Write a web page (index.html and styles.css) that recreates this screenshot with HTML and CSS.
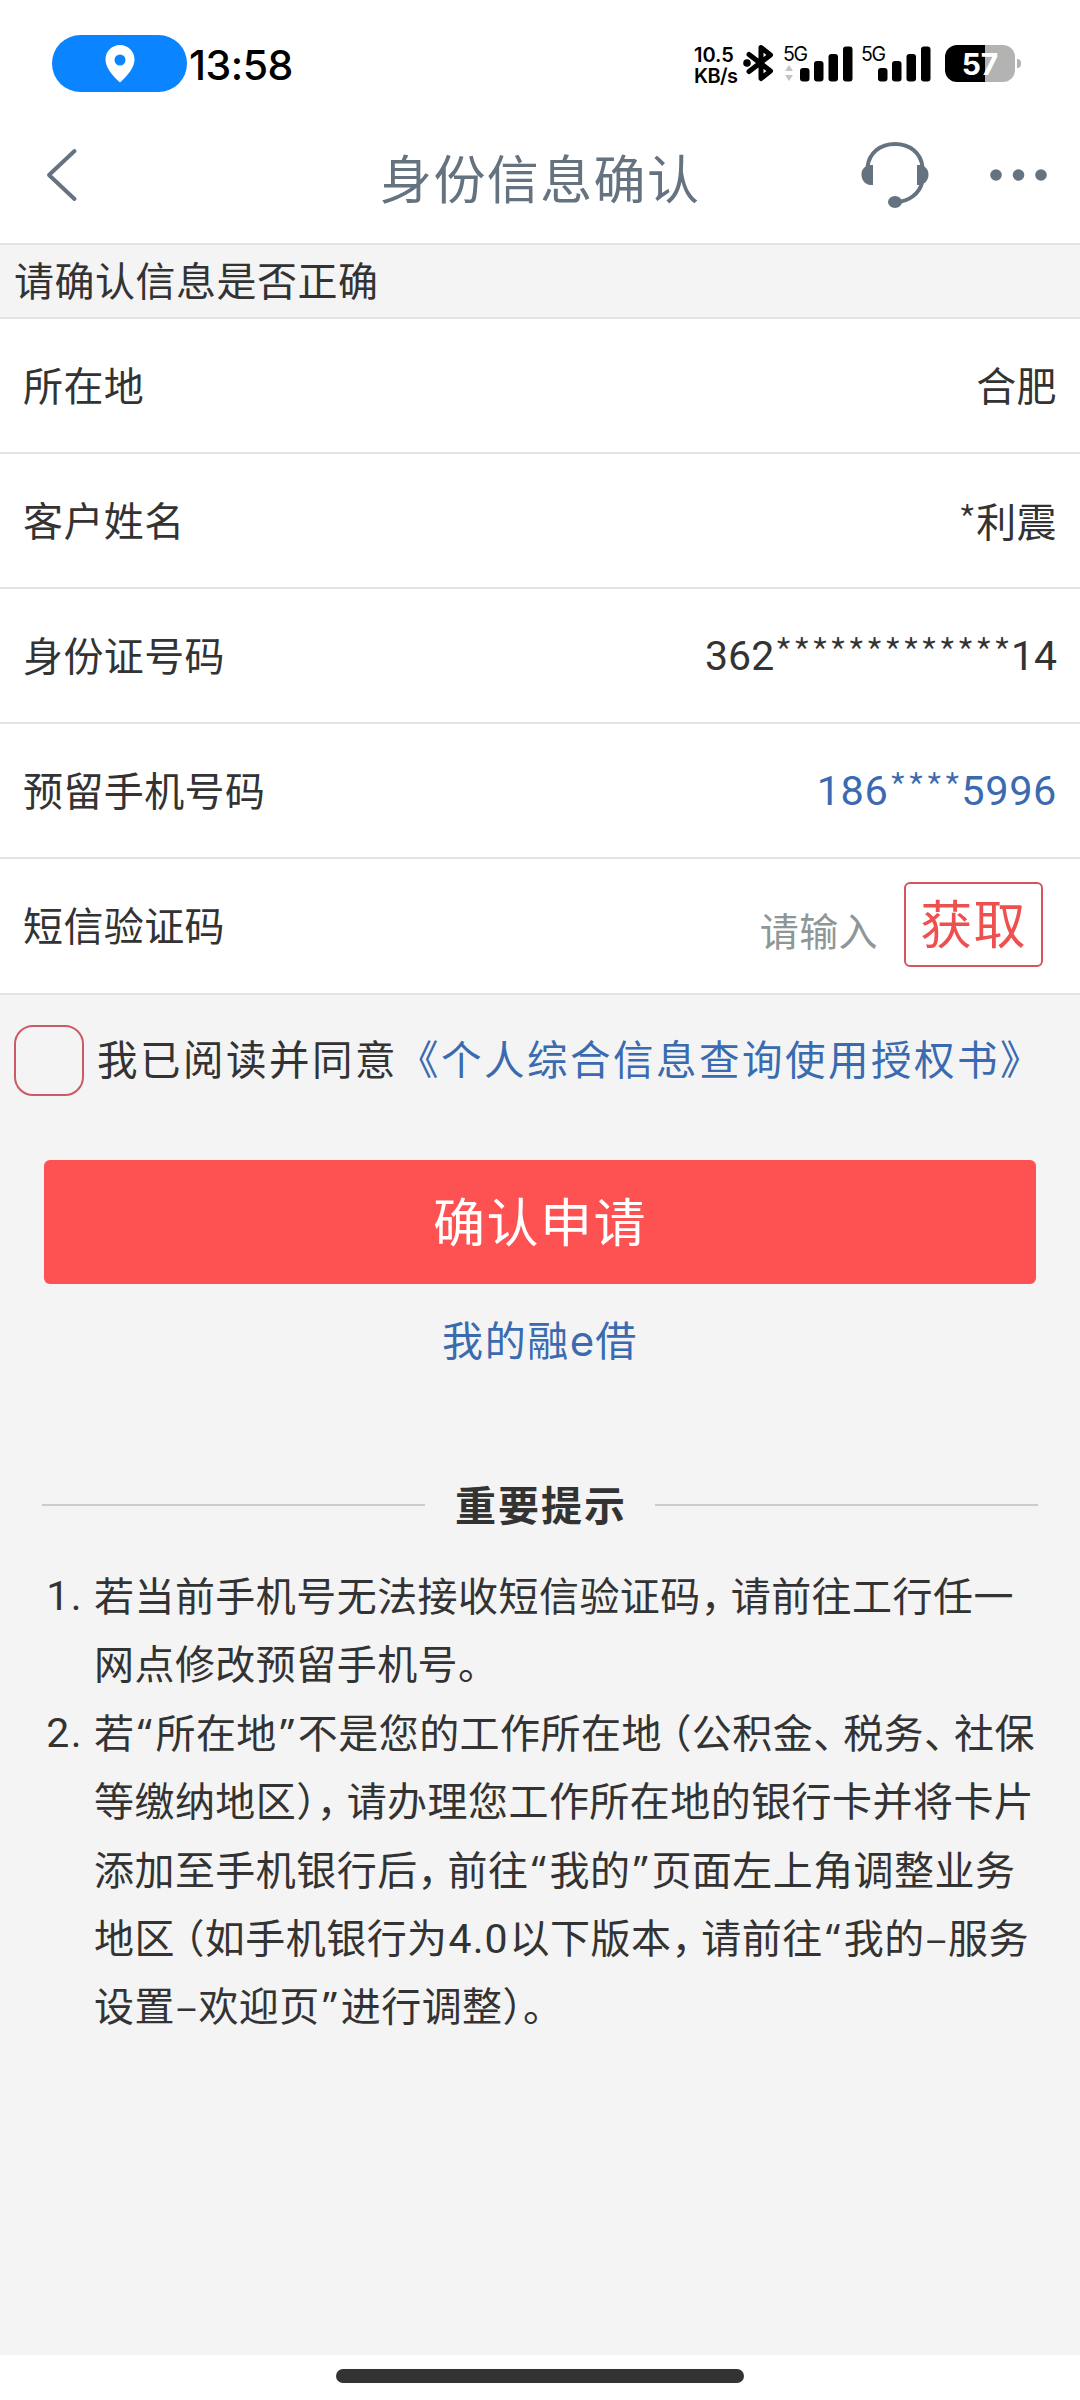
FILE: index.html
```html
<!DOCTYPE html>
<html lang="zh-CN">
<head>
<meta charset="utf-8">
<title>身份信息确认</title>
<link rel="stylesheet" href="styles.css">
</head>
<body>
<div class="screen">
  <div class="status">
    <div class="pill">
      <svg width="30" height="38" viewBox="0 0 30 38"><path fill="#fff" fill-rule="evenodd" d="M15 0C6.700 0 .5 6.500.5 14.500.5 22 6 29 15 37.500 24 29 29.500 22 29.500 14.500 29.500 6.500 23.300 0 15 0zM15 9.500a5.500 5.500 0 1 1 0 11 5.500 5.500 0 0 1 0-11z"/></svg>
    </div>
    <span class="clock">13:58</span>
    <div class="speed"><span class="rate">10.5</span><span class="unit">KB/s</span></div>
    <svg class="bluetooth" width="32" height="38" viewBox="0 0 32 38"><path d="M6 10.500 27.500 27 18 34.500V3.500L27.500 11 6 27.500" fill="none" stroke="#000" stroke-width="5" stroke-linejoin="round" stroke-linecap="round"/><circle cx="4" cy="19" r="3.800"/></svg>
    <svg class="signal" width="70" height="48" viewBox="0 -10 70 48">
      <text class="net" x="0" y="15.500" textLength="25">5G</text>
      <path fill="#c4c4c4" d="M6 20l4 6H2zM6 36l4-6H2z"/>
      <rect x="17" y="23" width="9.500" height="13.500" rx="3"/><rect x="31" y="16" width="9.500" height="20.500" rx="3"/><rect x="45.500" y="9" width="9.500" height="27.500" rx="3"/><rect x="60" y="1.500" width="9.500" height="35" rx="3"/>
    </svg>
    <svg class="signal second" width="70" height="48" viewBox="0 -10 70 48">
      <text class="net" x="0" y="15.500" textLength="25">5G</text>
      <rect x="17" y="23" width="9.500" height="13.500" rx="3"/><rect x="31" y="16" width="9.500" height="20.500" rx="3"/><rect x="45.500" y="9" width="9.500" height="27.500" rx="3"/><rect x="60" y="1.500" width="9.500" height="35" rx="3"/>
    </svg>
    <div class="battery">57</div><i class="nub"></i>
  </div>

  <div class="navbar">
    <svg class="back" width="32" height="54" viewBox="0 0 32 54"><path d="M28.500 3 3 27l25.500 24" fill="none" stroke="#65727f" stroke-width="4" stroke-linecap="round" stroke-linejoin="round"/></svg>
    <h1>身份信息确认</h1>
    <svg class="headset" width="68" height="68" viewBox="0 0 68 68"><path d="M6.500 26C8 12 19 3 34 3s26 9 27.500 23M61 42C58 53 48 60 36 61" fill="none" stroke="#65727f" stroke-width="4"/><path fill="#65727f" d="M12 24H9C3 25 .5 29 .5 33.500S3 43 9 44h3zM56 24h3c6 1 8.500 5 8.500 9.500S65 43 59 44h-3z"/><ellipse cx="34" cy="61" rx="7" ry="6" fill="#65727f"/></svg>
    <svg class="more" width="58" height="12" viewBox="0 0 58 12"><g fill="#65727f"><circle cx="6" cy="6" r="5.800"/><circle cx="28.500" cy="6" r="5.800"/><circle cx="51" cy="6" r="5.800"/></g></svg>
  </div>

  <div class="section">请确认信息是否正确</div>

  <div class="form">
    <div class="row"><span>所在地</span><span class="value">合肥</span></div>
    <div class="row"><span>客户姓名</span><span class="value"><span class="stars">*</span>利震</span></div>
    <div class="row"><span>身份证号码</span><span class="value id">362<span class="stars">*************</span>14</span></div>
    <div class="row"><span>预留手机号码</span><span class="value phone">186<span class="stars">****</span>5996</span></div>
    <div class="row"><span>短信验证码</span><span class="hint">请输入</span><button class="get">获取</button></div>
  </div>

  <div class="agree"><i class="check"></i><span>我已阅读并同意<a>《个人综合信息查询使用授权书》</a></span></div>
  <button class="submit">确认申请</button>
  <a class="mine">我的融<span class="latin">e</span>借</a>

  <div class="divider"><b>重要提示</b></div>

  <div class="tips">
    <div class="tip"><span class="num">1.</span><div>若当前手机号无法接收短信验证码<span class="mark">，</span>请前往工行任一<br>网点修改预留手机号。</div></div>
    <div class="tip"><span class="num">2.</span><div>若<span class="quote">“</span>所在地<span class="quote">”</span>不是您的工作所在地<span class="open">（</span>公积金<span class="mark">、</span>税务<span class="mark">、</span>社保<br>等缴纳地区<span class="close">）</span><span class="mark">，</span>请办理您工作所在地的银行卡并将卡片<br>添加至手机银行后<span class="mark">，</span>前往<span class="quote">“</span>我的<span class="quote">”</span>页面左上角调整业务<br>地区<span class="open">（</span>如手机银行为<span class="version">4.0</span>以下版本<span class="mark">，</span>请前往<span class="quote">“</span>我的<span class="dash">–</span>服务<br>设置<span class="dash">–</span>欢迎页<span class="quote">”</span>进行调整<span class="close">）</span>。</div></div>
  </div>

  <div class="gesture"><i></i></div>
</div>
</body>
</html>
```
FILE: styles.css
```css
* { box-sizing: border-box; }
body { margin: 0; background: #f4f4f4; color: #333; font-family: "Noto Sans CJK SC", sans-serif; text-spacing-trim: space-all; }
button { font-family: inherit; padding: 0; }
svg { display: block; flex: none; }
.screen { width: 1080px; height: 2400px; display: flex; flex-direction: column; overflow: hidden; }

.status { height: 110px; background: #fff; display: flex; align-items: flex-start; padding: 35px 0 0 52px; color: #000; flex: none; }
.pill { width: 135px; height: 57px; border-radius: 29px; background: #0b84ff; display: flex; justify-content: center; padding-top: 10px; }
.clock { width: 505px; padding-left: 2px; font: 500 41px/60px Inter, sans-serif; letter-spacing: -0.5px; }
.speed { width: 49px; padding: 10px 0 0 2px; font: 600 20px/21px Inter, sans-serif; display: flex; flex-direction: column; white-space: nowrap; }
.unit { letter-spacing: -0.6px; }
.bluetooth { margin: 9px 0 0 2px; }
.signal { margin: 0 0 0 8px; }
.signal.second { margin-left: 8px; }
.net { font: 400 19.500px Inter, sans-serif; }
.battery { width: 70px; height: 37px; margin: 10px 0 0 14px; border-radius: 12px; background: linear-gradient(90deg, #000 40px, #b3b3b3 40px); color: #fff; font: 700 30px/38px Inter, sans-serif; text-align: center; }
.nub { width: 4px; height: 9px; margin: 24px 0 0 2px; background: #b3b3b3; border-radius: 0 4px 4px 0; }

.navbar { height: 135px; background: #fff; border-bottom: 2px solid #e3e3e3; display: flex; align-items: flex-start; padding-left: 46px; color: #65727f; flex: none; }
.back { margin-top: 38px; }
h1 { margin: 29px 0 0 302px; width: 481px; font-weight: 400; font-size: 52px; line-height: 76px; letter-spacing: 1.400px; }
.headset { margin-top: 31px; }
.more { margin: 59px 0 0 61px; }

.section { height: 74px; line-height: 68px; padding-left: 14px; font-size: 40px; letter-spacing: 0.500px; border-bottom: 2px solid #e3e3e3; flex: none; }
.form { background: #fff; flex: none; }
.row { height: 135px; border-bottom: 2px solid #e3e3e3; padding: 0 23px 4px 23px; display: flex; align-items: center; font-size: 40px; letter-spacing: 0.400px; }
.row:last-child { height: 136px; }
.value { margin-left: auto; }
.stars { font-family: "Noto Sans CJK SC", sans-serif; font-weight: 300; font-size: 42px; letter-spacing: -0.400px; }
.id { font-family: Roboto, sans-serif; font-size: 41px; letter-spacing: 0; }
.phone { font-family: Roboto, sans-serif; font-size: 41.500px; letter-spacing: 0.600px; color: #3a6ab0; }
.id, .phone { line-height: 60px; }
.hint { margin-left: auto; color: #8f9696; font-size: 39px; padding-top: 9px; }
.get { width: 139px; height: 85px; margin: 1px 14px 0 26px; border: 2px solid #d3565c; border-radius: 6px; background: none; color: #ee504f; font-size: 52px; line-height: 76px; letter-spacing: 1.300px; padding-bottom: 6px; }

.agree { height: 165px; display: flex; padding: 30px 0 0 14px; font-size: 40.500px; line-height: 65px; letter-spacing: 2.500px; white-space: nowrap; flex: none; }
.check { width: 70px; height: 71px; border: 2px solid #c95a66; border-radius: 19px; margin-right: 13px; flex: none; }
a { color: #3a6ab0; }
.submit { width: 992px; height: 124px; margin-left: 44px; border: 0; border-radius: 6px; background: #fd5251; color: #fff; font-size: 52px; letter-spacing: 1.500px; padding-bottom: 5px; flex: none; }
.mine { height: 60px; margin-top: 24px; line-height: 60px; font-size: 41px; letter-spacing: 1.600px; text-align: center; flex: none; }
.latin { font-family: Inter, sans-serif; font-size: 42px; line-height: 1; letter-spacing: 1px; }
.divider { height: 60px; margin: 107px 42px 0 42px; display: flex; align-items: center; gap: 28px; font-size: 41px; letter-spacing: 2px; flex: none; }
.divider::before, .divider::after { content: ""; flex: 1; height: 2px; background: #ccc; }
.divider b { line-height: 56px; padding: 0 0 4px 2px; }

.tips { margin-top: 25px; font-size: 40px; line-height: 68.400px; letter-spacing: 0.450px; white-space: nowrap; flex: none; }
.tip { display: flex; }
.num { width: 94px; padding: 2px 11px 0 0; text-align: right; flex: none; font-family: Roboto, sans-serif; font-size: 41px; letter-spacing: 1.500px; }
.mark { font-feature-settings: "halt"; margin-right: 9.500px; }
.open { font-feature-settings: "halt"; margin-left: 9.500px; }
.close { font-feature-settings: "halt"; }
.quote { display: inline-block; width: 21px; text-align: center; font-family: "Noto Sans", sans-serif; line-height: 1; }
.dash { display: inline-block; width: 23.500px; text-align: center; line-height: 1; }
.version { display: inline-block; width: 62px; text-align: center; font-family: Roboto, sans-serif; font-size: 41px; letter-spacing: 1px; line-height: 1; }

.gesture { height: 45px; margin-top: auto; background: #fff; display: flex; justify-content: center; padding-top: 14px; flex: none; }
.gesture i { width: 408px; height: 14px; border-radius: 7px; background: #333; }
```
